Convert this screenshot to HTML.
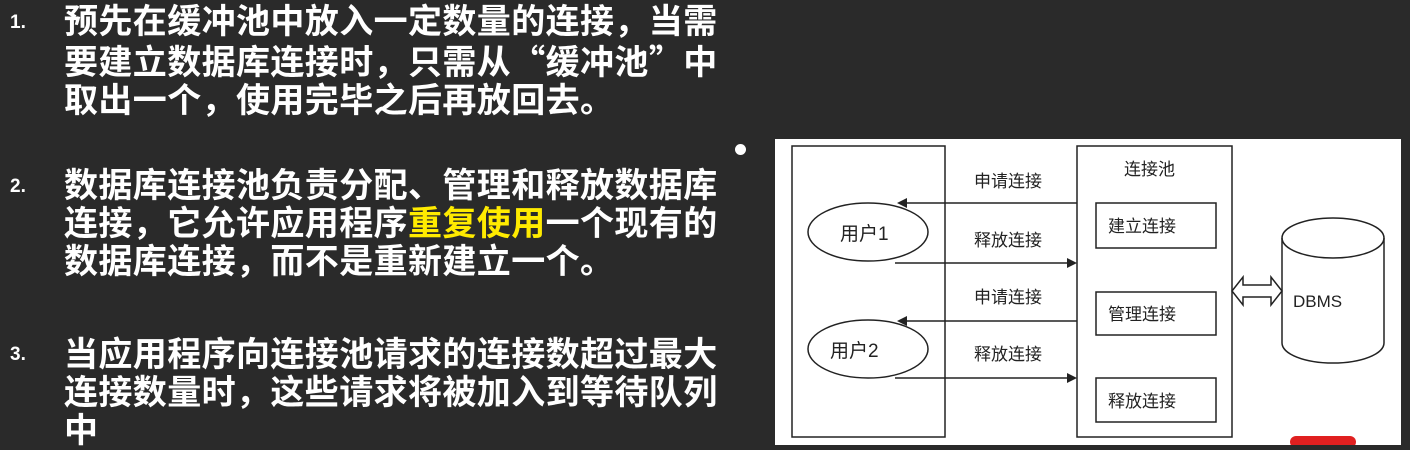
<!DOCTYPE html>
<html><head><meta charset="utf-8"><style>
body{margin:0;width:1410px;height:445px;overflow:hidden;background:#2a2a2a;position:relative;font-family:"Liberation Sans","Noto Sans CJK SC",sans-serif}
.n{position:absolute;left:10px;color:#fff;font-weight:bold;font-size:19px}
.t{position:absolute;left:64px;color:#fff;font-weight:bold;font-size:34px;line-height:38px;width:700px;white-space:nowrap;letter-spacing:0.4px}
.y{color:#ffeb00}
.q{font-family:"Noto Sans CJK SC",sans-serif}
</style></head><body>
<div class="n" style="top:12px">1.</div>
<div class="t" style="top:3px">预先在缓冲池中放入一定数量的连接，当需<br>要建立数据库连接时，只需从<span class="q">“</span>缓冲池<span class="q">”</span>中<br>取出一个，使用完毕之后再放回去。</div>
<div class="n" style="top:176px">2.</div>
<div class="t" style="top:167px">数据库连接池负责分配、管理和释放数据库<br>连接，它允许应用程序<span class="y">重复使用</span>一个现有的<br>数据库连接，而不是重新建立一个。</div>
<div class="n" style="top:344px">3.</div>
<div class="t" style="top:336px">当应用程序向连接池请求的连接数超过最大<br>连接数量时，这些请求将被加入到等待队列<br>中</div>
<div style="position:absolute;left:735px;top:144px;width:11px;height:11px;border-radius:50%;background:#fff"></div>
<svg style="position:absolute;left:0;top:0" width="1410" height="445">
<rect x="775" y="139" width="626" height="306" fill="#fff"/>
<g fill="none" stroke="#222" stroke-width="1.5">
<rect x="792" y="146" width="153" height="291"/>
<rect x="1077" y="146" width="155" height="291"/>
<rect x="1096" y="203" width="120" height="45"/>
<rect x="1096" y="292" width="120" height="43"/>
<rect x="1096" y="378" width="120" height="44"/>
<ellipse cx="868" cy="232" rx="60" ry="29"/>
<ellipse cx="868" cy="349" rx="60" ry="29"/>
<path d="M1282 238 V343 A51 20 0 0 0 1384 343 V238"/>
<ellipse cx="1333" cy="238" rx="51" ry="20"/>
<path d="M1077 203 H905 M895 263 H1070 M1077 321 H905 M895 378 H1070"/>
<path d="M1232 291 L1243 277 V285 H1271 V277 L1282 291 L1271 305 V297 H1243 V305 Z"/>
</g>
<g fill="#222"><path d="M897 203 l10 -5 v10z"/><path d="M1077 263 l-10 -5 v10z"/><path d="M897 321 l10 -5 v10z"/><path d="M1077 378 l-10 -5 v10z"/></g>
<g font-family="Liberation Sans,Noto Sans CJK SC,sans-serif" font-size="17" fill="#222">
<text x="974" y="187">申请连接</text><text x="974" y="246">释放连接</text>
<text x="974" y="303">申请连接</text><text x="974" y="360">释放连接</text>
<text x="1124" y="175">连接池</text>
<text x="1108" y="232">建立连接</text><text x="1108" y="320">管理连接</text><text x="1108" y="407">释放连接</text>
<text x="840" y="240" font-size="19">用户1</text><text x="830" y="357" font-size="19">用户2</text>
<text x="1293" y="307" font-size="17">DBMS</text>
</g>
<rect x="1290" y="436" width="66" height="12" rx="6" fill="#e02020"/>
</svg>
</body></html>
